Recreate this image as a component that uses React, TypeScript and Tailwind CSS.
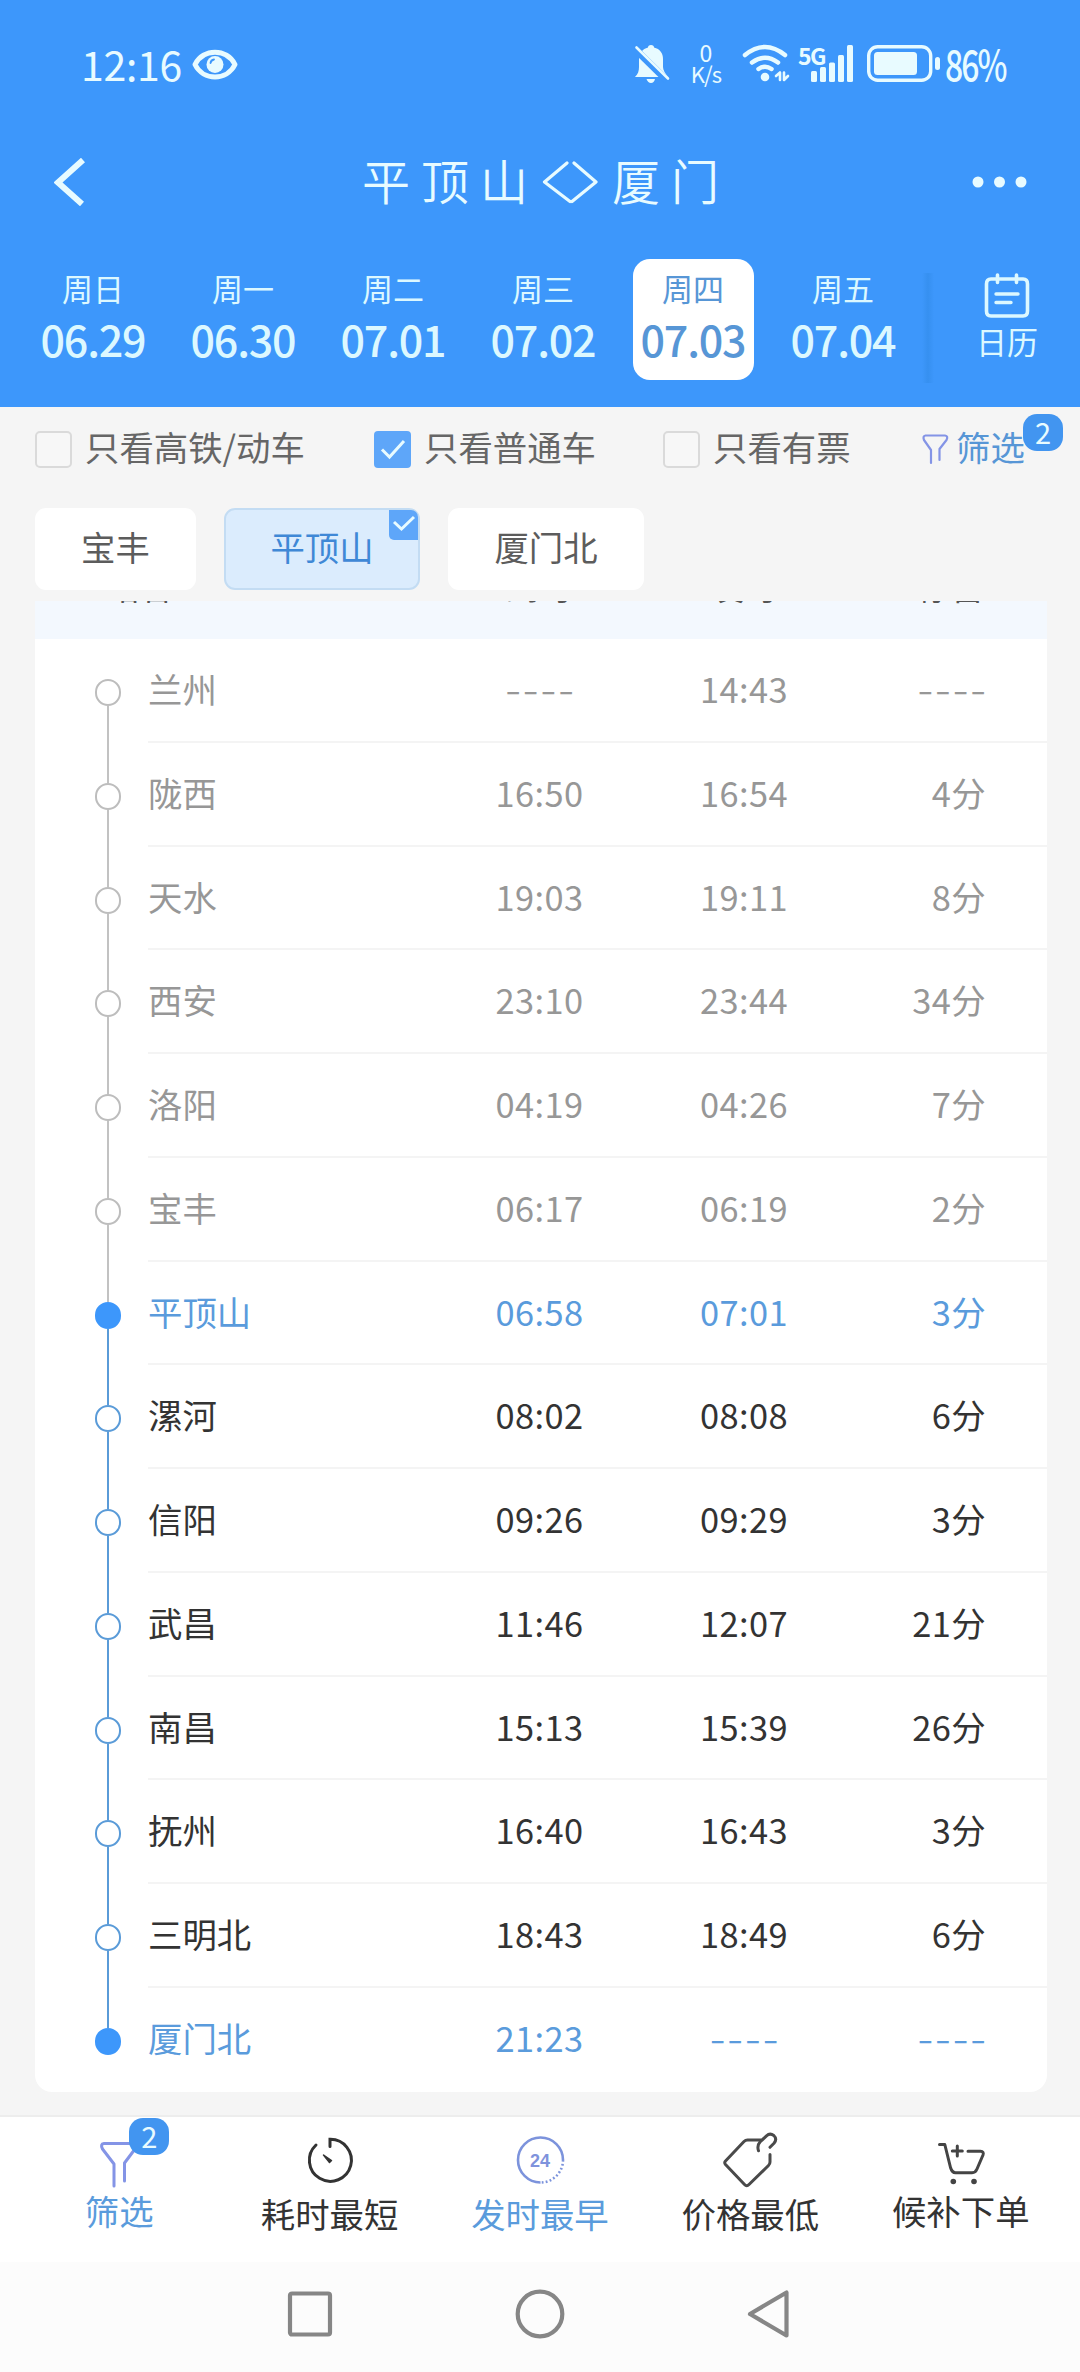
import type { ReactNode } from 'react';

type Stop = { name: string; arrive: string; depart: string; stay: string };

const days = [
  { week: '周日', date: '06.29' },
  { week: '周一', date: '06.30' },
  { week: '周二', date: '07.01' },
  { week: '周三', date: '07.02' },
  { week: '周四', date: '07.03' },
  { week: '周五', date: '07.04' },
];

const stops: Stop[] = [
  { name: '兰州', arrive: '----', depart: '14:43', stay: '----' },
  { name: '陇西', arrive: '16:50', depart: '16:54', stay: '4分' },
  { name: '天水', arrive: '19:03', depart: '19:11', stay: '8分' },
  { name: '西安', arrive: '23:10', depart: '23:44', stay: '34分' },
  { name: '洛阳', arrive: '04:19', depart: '04:26', stay: '7分' },
  { name: '宝丰', arrive: '06:17', depart: '06:19', stay: '2分' },
  { name: '平顶山', arrive: '06:58', depart: '07:01', stay: '3分' },
  { name: '漯河', arrive: '08:02', depart: '08:08', stay: '6分' },
  { name: '信阳', arrive: '09:26', depart: '09:29', stay: '3分' },
  { name: '武昌', arrive: '11:46', depart: '12:07', stay: '21分' },
  { name: '南昌', arrive: '15:13', depart: '15:39', stay: '26分' },
  { name: '抚州', arrive: '16:40', depart: '16:43', stay: '3分' },
  { name: '三明北', arrive: '18:43', depart: '18:49', stay: '6分' },
  { name: '厦门北', arrive: '21:23', depart: '----', stay: '----' },
];

const FROM = 6;
const TO = stops.length - 1;

function StatusBar() {
  return (
    <div className="flex h-[130px] items-start pl-[81px] pr-[75px] pt-[44px] text-[#e8fbff]">
      <span className="text-[41px] leading-[38px] tracking-[-0.300px]">12:16</span>
      <svg className="ml-[10px] mt-[5px] h-[31px] w-[46px]" viewBox="0 0 46 31" fill="none">
        <path d="M3 15.5C11 -1 35 -1 43 15.5C35 32 11 32 3 15.5Z" stroke="currentColor" strokeWidth="5" strokeLinejoin="round" />
        <circle cx="23" cy="15.5" r="8.5" fill="currentColor" />
        <path d="M18.5 14Q19 11 22 10.5" stroke="#3d97fb" strokeWidth="1.8" strokeLinecap="round" />
      </svg>
      <div className="ml-auto flex items-start">
        <svg className="h-[40px] w-[36px]" viewBox="0 0 36 40" fill="currentColor">
          <path d="M17 1C19 1 20 2.2 20 3.6C26 5 29 9.500 29 15V23C29 26 31 29 34 33H1C4 30 5 27 5 23V15C5 9.500 8.500 5 14 3.600C14 2.200 15 1 17 1ZM12.500 35H21Q20 39 17 39T12.500 35Z" />
          <path d="M0.500 4.500L33 36.500" stroke="#3d97fb" strokeWidth="7" />
          <path d="M2.500 3.500L34 34.500" stroke="currentColor" strokeWidth="2.600" strokeLinecap="round" />
        </svg>
        <div className="ml-[20px] flex w-[32px] flex-col items-center">
          <span className="text-[23px] leading-[17px]">0</span>
          <span className="mt-[4px] text-[22px] leading-[17px] tracking-[-0.800px]">K/s</span>
        </div>
        <svg className="ml-[20px] h-[40px] w-[48px]" viewBox="0 0 48 40" fill="none" stroke="currentColor" strokeLinecap="round">
          <path d="M3 11Q23 -5 43 11" strokeWidth="4.500" />
          <path d="M10 18.500Q23 9 36 18.500" strokeWidth="4.500" />
          <path d="M16.500 25Q23 20.500 29.500 25" strokeWidth="4.500" />
          <circle cx="23" cy="33" r="4.300" fill="currentColor" stroke="none" />
          <path d="M34 32L38 28.500V36M42 28.500V36L46 32" strokeWidth="2.600" strokeLinejoin="round" />
        </svg>
        <div className="relative ml-[8px] h-[40px] w-[56px]">
          <span className="absolute left-0 top-px text-[23px] font-bold leading-[20px] tracking-[-1.500px]">5G</span>
          <svg className="h-[40px] w-[56px]" viewBox="0 0 56 40" fill="currentColor">
            <rect x="13" y="27" width="6" height="11" rx="1.500" />
            <rect x="22" y="23" width="6" height="15" rx="1.500" />
            <rect x="31" y="18.500" width="6" height="19.500" rx="1.500" />
            <rect x="40" y="11" width="6" height="27" rx="1.500" />
            <rect x="49" y="1" width="6" height="37" rx="1.500" />
          </svg>
        </div>
        <svg className="ml-[13px] mt-px h-[37px] w-[74px]" viewBox="0 0 74 37" fill="currentColor">
          <rect x="1.700" y="1.700" width="62" height="33.600" rx="9" fill="none" stroke="currentColor" strokeWidth="3.400" />
          <rect x="7" y="7" width="43" height="23" rx="3.500" />
          <rect x="68" y="12" width="5" height="13" rx="2.500" />
        </svg>
        <span className="ml-[4px] w-[60px] origin-left scale-x-[0.760] whitespace-nowrap text-[42px] font-medium leading-[37px] tracking-[-2.500px]">86%</span>
      </div>
    </div>
  );
}

function TitleBar() {
  return (
    <div className="flex h-[103px] items-center justify-between pl-[54px] pr-[53px] text-[#e8fbff]">
      <svg className="h-[48px] w-[112px]" viewBox="0 0 112 48">
        <path d="M29 2L4 24.500L28 46" fill="none" stroke="currentColor" strokeWidth="6" />
      </svg>
      <h1 className="flex items-center text-[48px] font-[350] leading-[60px] tracking-[11px]">
        <span className="-mt-[5px]">平顶山</span>
        <svg className="ml-[3px] mr-[14px] h-[44px] w-[56px]" viewBox="0 0 56 44" fill="none" stroke="currentColor" strokeWidth="3.200" strokeLinecap="round" strokeLinejoin="round">
          <path d="M25 3L2.500 22L28 41.500M32 3L54 22L30 41.500" />
        </svg>
        <span className="-mr-[11px] -mt-[5px]">厦门</span>
      </h1>
      <svg className="h-[12px] w-[112px]" viewBox="0 0 112 12" fill="currentColor">
        <circle cx="63" cy="6" r="5.500" />
        <circle cx="84.500" cy="6" r="5.500" />
        <circle cx="106" cy="6" r="5.500" />
      </svg>
    </div>
  );
}

function DateBar() {
  return (
    <div className="flex h-[174px] items-start pl-[18px] text-[#dcf8ff]">
      {days.map((d) => {
        const active = d.date === '07.03';
        return (
          <div key={d.date} className="flex w-[150px] justify-center pt-[26px]">
            <div
              className={
                active
                  ? 'flex h-[121px] w-[121px] flex-col items-center rounded-[17px] bg-white text-[#5796d6]'
                  : 'flex h-[121px] w-[121px] flex-col items-center'
              }
            >
              <span className="mt-[11px] text-[31px] leading-[36px]">{d.week}</span>
              <span className="mt-[10px] text-[43px] font-medium leading-[44px] tracking-[-1.200px]">{d.date}</span>
            </div>
          </div>
        );
      })}
      <div className="ml-[4px] mt-[40px] h-[110px] w-[12px] bg-linear-to-r from-[#3d97fb] via-[#3690f0] to-[#3d97fb]" />
      <div className="ml-[35px] mt-[40px] flex w-[76px] flex-col items-center">
        <svg className="h-[46px] w-[46px]" viewBox="0 0 46 46" fill="none" stroke="currentColor" strokeLinecap="round">
          <path d="M8 6H7Q2.500 6 2.500 11V38Q2.500 43 7 43H39Q43.500 43 43.500 38V11Q43.500 6 39 6H38M19 6H27M13.500 2V9.500M32.500 2V9.500M8 6H38" strokeWidth="3.600" />
          <path d="M12 21H34M12 29.500H27" strokeWidth="3.400" />
        </svg>
        <span className="mt-[4px] text-[31px] leading-[36px]">日历</span>
      </div>
    </div>
  );
}

function Check({ checked }: { checked?: boolean }) {
  if (!checked) return <span className="h-[37px] w-[37px] rounded-[5px] border-[2.500px] border-[#dadada] bg-[#f7f7f7]" />;
  return (
    <span className="grid h-[37px] w-[37px] place-items-center rounded-[4px] bg-[#5ea6f9]">
      <svg className="h-[24px] w-[26px]" viewBox="0 0 26 24" fill="none" stroke="#e8fbff" strokeWidth="3">
        <path d="M2 11.500L9.500 19L24 3" />
      </svg>
    </span>
  );
}

function Badge({ children }: { children: ReactNode }) {
  return (
    <span className="grid h-[37px] w-[40px] place-items-center rounded-[14px] bg-[#4295f0] text-[29px] leading-[35px] text-[#e8fbff]">
      <span className="-mt-[3px]">{children}</span>
    </span>
  );
}

function FilterBar() {
  return (
    <div className="flex h-[88px] shrink-0 items-start pl-[35px] pt-[24px] text-[34.400px] leading-[37px] text-[#666]">
      <label className="flex w-[339px] gap-[13px]">
        <Check />
        <span className="-mt-[3px]">只看高铁/动车</span>
      </label>
      <label className="flex w-[289px] gap-[13px]">
        <Check checked />
        <span className="-mt-[3px]">只看普通车</span>
      </label>
      <label className="flex w-[259px] gap-[13px]">
        <Check />
        <span className="-mt-[3px]">只看有票</span>
      </label>
      <div className="relative flex text-[#5796d6]">
        <svg className="mt-[2px] h-[32px] w-[27px]" viewBox="0 0 27 32" fill="none" stroke="#8494e6" strokeWidth="2.200" strokeLinecap="round" strokeLinejoin="round">
          <path d="M9 30V17L2 7Q0.500 3 3.500 2.500H23Q26.500 3 24.500 7L17.500 16V27" />
        </svg>
        <span className="-mt-[3px] ml-[7px]">筛选</span>
        <div className="absolute left-[101px] top-[-17px]">
          <Badge>2</Badge>
        </div>
      </div>
    </div>
  );
}

function StationChips() {
  return (
    <div className="flex h-[106px] shrink-0 gap-[28px] pl-[35px] pt-[13px] text-[34.400px] leading-[76px] text-[#5c5c5c]">
      <button className="flex h-[82px] w-[161px] justify-center rounded-[11px] bg-white">宝丰</button>
      <button className="relative flex h-[82px] w-[196px] justify-center rounded-[11px] border-[2.500px] border-[#c3dcf3] bg-[#dbecfd] leading-[72px] text-[#3f88d6]">
        平顶山
        <span className="absolute right-0 top-0 grid h-[30px] w-[29px] place-items-center rounded-bl-[5px] rounded-tr-[7px] bg-[#5ea6f9]">
          <svg className="h-[20px] w-[24px]" viewBox="0 0 24 20" fill="none" stroke="#e8fbff" strokeWidth="3">
            <path d="M2 7L9.500 14L22 2" />
          </svg>
        </span>
      </button>
      <button className="flex h-[82px] w-[196px] justify-center rounded-[11px] bg-white">厦门北</button>
    </div>
  );
}

function Cell({ value }: { value: string }) {
  if (value === '----') {
    return <span className="-mr-[2px] block text-[47px] font-light leading-[94px] tracking-[2px]">----</span>;
  }
  return <span className="tracking-[0.400px]">{value}</span>;
}

function StopRow({ stop, index }: { stop: Stop; index: number }) {
  const end = index === FROM || index === TO;
  const passed = index < FROM;
  const text = end ? 'text-[#5a9bdc]' : passed ? 'text-[#979797]' : 'text-[#333]';
  const dot = end
    ? 'border-[#3d97fb] bg-[#3d97fb]'
    : passed
      ? 'border-[#bdbdbd] bg-white'
      : 'border-[#5a9bd8] bg-white';
  const above = index === 0 ? 'bg-transparent' : index <= FROM ? 'bg-[#c2c2c2]' : 'bg-[#5a9bd8]';
  const below = index === TO ? 'bg-transparent' : passed ? 'bg-[#c2c2c2]' : 'bg-[#5a9bd8]';
  return (
    <div className="flex h-[103.750px]">
      <div className="ml-[60px] flex w-[26px] flex-col items-center">
        <div className={`h-[40px] w-[2.500px] ${above}`} />
        <div className={`h-[27px] w-[26px] rounded-full border-[2.500px] ${dot}`} />
        <div className={`w-[2.500px] flex-1 ${below}`} />
      </div>
      <div
        className={`ml-[27px] flex flex-1 text-[34.400px] leading-[99px] ${text} ${index === TO ? '' : 'border-b-2 border-[#f4f4f4]'}`}
      >
        <span className="w-[290px]">{stop.name}</span>
        <span className="w-[203px] text-center"><Cell value={stop.arrive} /></span>
        <span className="w-[206px] text-center"><Cell value={stop.depart} /></span>
        <span className="w-[139px] text-right"><Cell value={stop.stay} /></span>
      </div>
    </div>
  );
}

function Timetable() {
  return (
    <div className="ml-[35px] mr-[33px] h-[1491px] shrink-0 overflow-hidden rounded-b-[17px] bg-white">
      {/* header row scrolled almost out of view */}
      <div className="flex h-[38px] overflow-hidden bg-[#f3f8fe] text-[33px] leading-[40px] text-[#555]">
        <span className="-mt-[35px] ml-[71px] w-[331px]">站名</span>
        <span className="-mt-[35px] w-[204px] text-center">到时</span>
        <span className="-mt-[35px] w-[206px] text-center">发时</span>
        <span className="-mt-[35px] w-[137px] text-right">停留</span>
      </div>
      {stops.map((s, i) => (
        <StopRow key={s.name} stop={s} index={i} />
      ))}
    </div>
  );
}

function Tab({ label, icon, active, raised }: { label: string; icon: ReactNode; active?: boolean; raised?: boolean }) {
  return (
    <div className={`flex w-[210.400px] flex-col items-center ${active ? 'text-[#5a9bdc]' : 'text-[#333]'}`}>
      <div className="h-[76px] pt-[13px]">{icon}</div>
      <span className={`text-[34.400px] leading-[40px] ${raised ? '-mt-[3px]' : ''}`}>{label}</span>
    </div>
  );
}

function TabBar() {
  return (
    <nav className="flex h-[147px] shrink-0 border-t-2 border-[#ededed] bg-white px-[14px]">
      <Tab
        active
        raised
        label="筛选"
        icon={
          <div className="relative">
            <svg className="h-[60px] w-[60px]" viewBox="0 0 60 60" fill="none" stroke="#8494e6" strokeWidth="3" strokeLinecap="round" strokeLinejoin="round">
              <path d="M25 56V34L13.500 19Q11 14 15 13.500H43Q48.500 14 46 19L35.500 33V51" />
            </svg>
            <div className="absolute left-[40px] top-[-12px]">
              <Badge>2</Badge>
            </div>
          </div>
        }
      />
      <Tab
        label="耗时最短"
        icon={
          <svg className="h-[60px] w-[60px]" viewBox="0 0 60 60" fill="none" stroke="currentColor" strokeWidth="3" strokeLinecap="round">
            <path d="M30 16.500V9.300A21 21 0 1 1 16 15" />
            <path d="M23.500 25L31.500 30.500L29.500 32.500Z" fill="currentColor" strokeWidth="1.500" strokeLinejoin="round" />
          </svg>
        }
      />
      <Tab
        active
        label="发时最早"
        icon={
          <div className="relative grid place-items-center">
            <svg className="h-[60px] w-[60px]" viewBox="0 0 60 60" fill="none" stroke="#7c93dc" strokeWidth="2.600">
              <path d="M30.500 52.500A22.500 22.500 0 1 1 53 30" />
              <path d="M53 30A22.500 22.500 0 0 1 30.500 52.500" strokeDasharray="1.800 2.200" />
            </svg>
            <span className="absolute top-[21px] font-['Liberation_Sans'] text-[18px] font-bold leading-[20px] text-[#7f93dc]">24</span>
          </div>
        }
      />
      <Tab
        label="价格最低"
        icon={
          <svg className="h-[60px] w-[60px]" viewBox="0 0 60 60" fill="none" stroke="#4a4a4a" strokeWidth="3" strokeLinecap="round" strokeLinejoin="round">
            <path d="M41 10H27.500Q25.500 10 24 11.500L5.500 31Q4 32.700 5.500 34.500L24.500 54.500Q26.700 56.800 29 54.500L48.500 35.500Q50 34 50 32V24.500" />
            <path d="M38.500 20.800Q36.800 15.500 40 12L46.500 5.800Q50 2.600 53.800 5.500Q57.500 9 54 13.300L50 17.300" />
          </svg>
        }
      />
      <Tab
        raised
        label="候补下单"
        icon={
          <svg className="h-[60px] w-[60px]" viewBox="0 0 60 60" fill="none" stroke="#444" strokeWidth="3" strokeLinecap="round" strokeLinejoin="round">
            <path d="M8.500 14.500H13.800L19.500 37.500Q21 42.700 24.500 42.700H41Q44.500 42.700 46 39L52 25Q53.200 21.300 49.500 21.300H37M26.300 16V26M21.300 21H31.300" />
            <circle cx="22.300" cy="51.500" r="2.800" fill="#444" stroke="none" />
            <circle cx="43" cy="51.500" r="2.800" fill="#444" stroke="none" />
          </svg>
        }
      />
    </nav>
  );
}

function SystemNav() {
  return (
    <div className="flex flex-1 items-start justify-center gap-[178px] bg-[#fcfcfc] pt-[26px]">
      <svg className="h-[52px] w-[52px]" viewBox="0 0 52 52" fill="none" stroke="#868686" strokeWidth="4.200">
        <rect x="6" y="5.500" width="40" height="41" rx="2" />
      </svg>
      <svg className="h-[52px] w-[52px]" viewBox="0 0 52 52" fill="none" stroke="#868686" strokeWidth="4.200">
        <circle cx="26" cy="26" r="22.300" />
      </svg>
      <svg className="h-[52px] w-[52px]" viewBox="0 0 52 52" fill="none" stroke="#868686" strokeWidth="4.200" strokeLinejoin="round">
        <path d="M42.500 4.500V47.500L6 26Z" />
      </svg>
    </div>
  );
}

export default function App() {
  return (
    <div className="flex h-[2372px] w-[1080px] flex-col overflow-hidden bg-[#f5f5f5] font-['Noto_Sans_CJK_SC',sans-serif]">
      <header className="h-[407px] shrink-0 bg-[#3d97fb]">
        <StatusBar />
        <TitleBar />
        <DateBar />
      </header>
      <FilterBar />
      <StationChips />
      <Timetable />
      <div className="h-[23px] shrink-0" />
      <TabBar />
      <SystemNav />
    </div>
  );
}
